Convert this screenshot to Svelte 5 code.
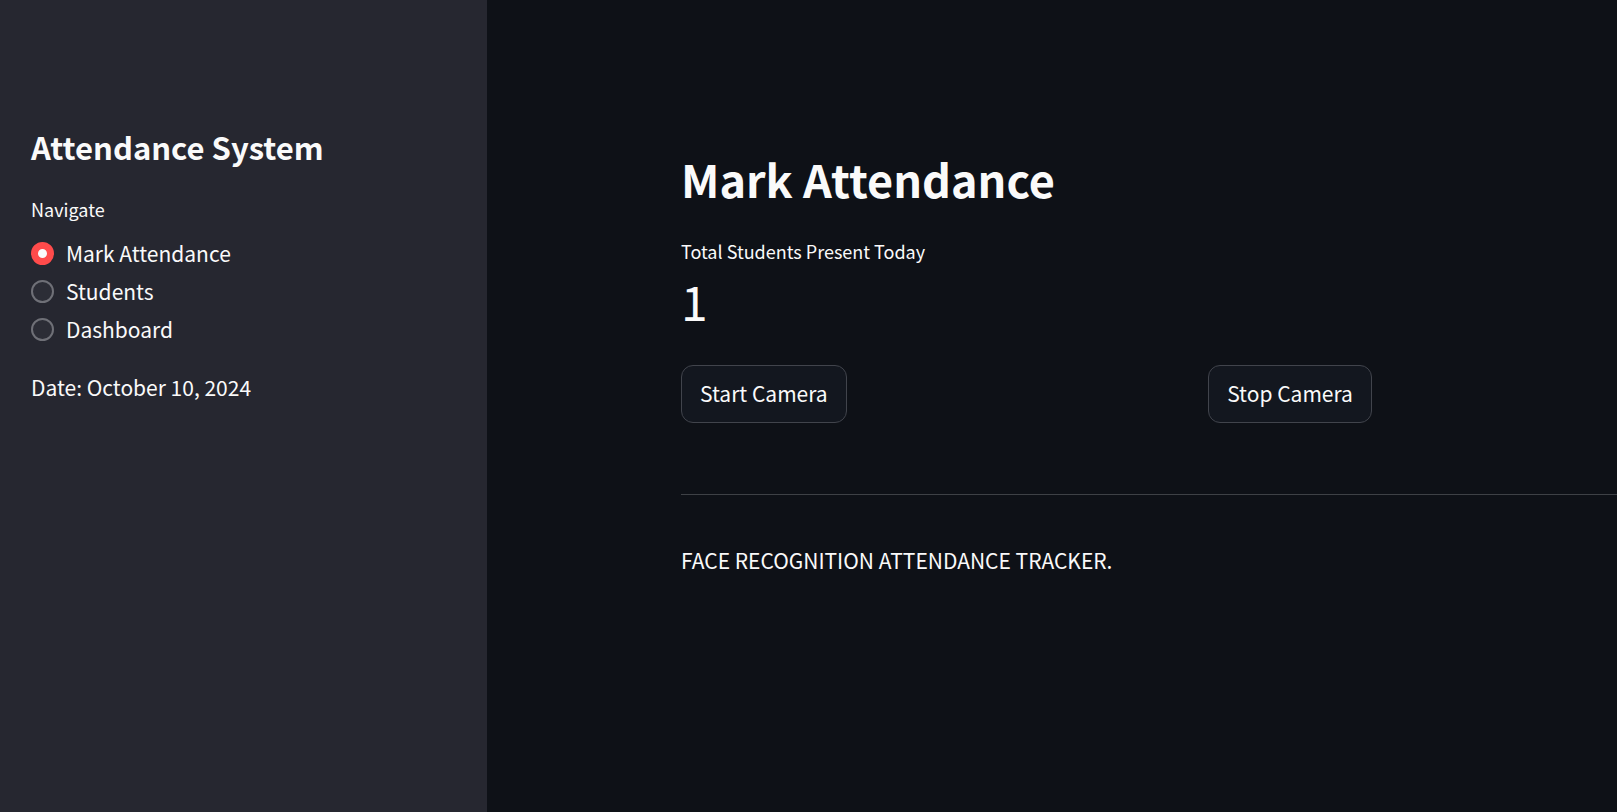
<script>
  const pages = ['Mark Attendance', 'Students', 'Dashboard'];
  let page = $state('Mark Attendance');
</script>

<div class="app">
  <aside>
    <h2>Attendance System</h2>
    <fieldset>
      <legend>Navigate</legend>
      <div class="options">
        {#each pages as name}
          <label>
            <input type="radio" name="page" value={name} bind:group={page} />
            <span>{name}</span>
          </label>
        {/each}
      </div>
    </fieldset>
    <p class="date">Date: October 10, 2024</p>
  </aside>

  <main>
    <h1>Mark Attendance</h1>
    <section class="metric">
      <p class="metric-label">Total Students Present Today</p>
      <p class="metric-value">1</p>
    </section>
    <div class="actions">
      <div><button type="button">Start Camera</button></div>
      <div><button type="button">Stop Camera</button></div>
    </div>
    <hr />
    <p class="about">FACE RECOGNITION ATTENDANCE TRACKER.</p>
  </main>
</div>

<style>
  :global(body) {
    margin: 0;
    background: #0e1117;
  }

  .app {
    display: flex;
    min-height: 100vh;
    color: #fafafa;
    font-family: 'Noto Sans CJK JP', 'Noto Sans', sans-serif;
    font-size: 21px;
    line-height: 36px;
  }

  h1,
  h2,
  p {
    margin: 0;
  }

  aside {
    box-sizing: border-box;
    flex: 0 0 487px;
    padding: 125px 31px 0;
    background: #262730;
  }

  h2 {
    font-size: 31px;
    font-weight: 700;
    line-height: 44px;
  }

  fieldset {
    margin: 26px 0 0;
    padding: 0;
    border: 0;
    min-width: 0;
  }

  legend {
    padding: 0;
    font-size: 18px;
    line-height: 28px;
  }

  .options {
    display: flex;
    flex-direction: column;
    align-items: flex-start;
    gap: 2px;
    padding-top: 12px;
  }

  label {
    display: flex;
    align-items: center;
    gap: 12px;
    cursor: pointer;
  }

  input {
    appearance: none;
    box-sizing: border-box;
    width: 23px;
    height: 23px;
    margin: 0;
    border: 2px solid #6f7077;
    border-radius: 50%;
    background: #2c2d36;
  }

  input:checked {
    border: 7px solid #ff4b4b;
    background: #fafafa;
  }

  .date {
    margin-top: 22px;
  }

  main {
    flex: 1;
    min-width: 0;
    padding: 146px 0 0 194px;
  }

  h1 {
    font-size: 45px;
    font-weight: 700;
    line-height: 66px;
  }

  .metric {
    margin-top: 25px;
  }

  .metric-label {
    font-size: 18px;
    line-height: 28px;
  }

  .metric-value {
    font-size: 48px;
    line-height: 70px;
  }

  .actions {
    display: grid;
    grid-template-columns: 16fr 13fr;
    gap: 24px;
    margin-top: 30px;
  }

  button {
    display: block;
    padding: 9px 18px 11px;
    border: 1px solid #41444c;
    border-radius: 12px;
    background: #13171f;
    color: inherit;
    font: inherit;
    cursor: pointer;
  }

  hr {
    margin: 71px 0 0;
    border: 0;
    border-top: 1px solid #3e4146;
  }

  .about {
    margin-top: 47px;
  }
</style>
